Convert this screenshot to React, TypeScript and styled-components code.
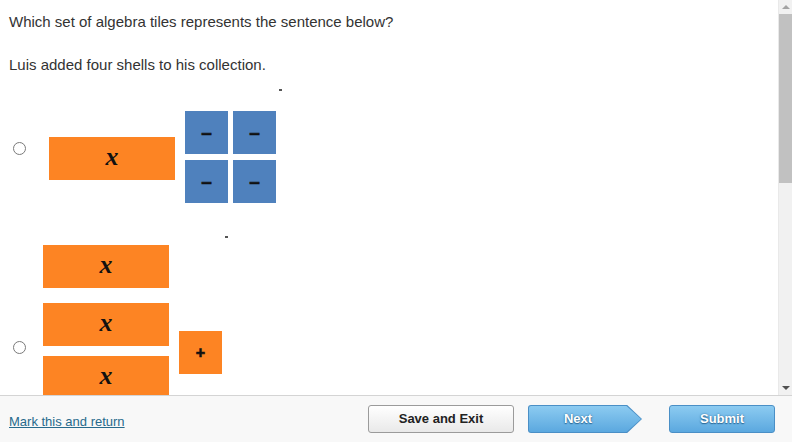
import React from 'react';
import styled, { createGlobalStyle } from 'styled-components';

const GlobalStyle = createGlobalStyle`
  html, body {
    margin: 0;
    padding: 0;
    background: #ffffff;
    font-family: "Liberation Sans", Arial, sans-serif;
  }
`;

const Page = styled.div`
  width: 792px;
  height: 442px;
  display: flex;
  flex-direction: column;
  overflow: hidden;
`;

const ScrollRegion = styled.div`
  height: 395px;
  display: flex;
  overflow: hidden;
`;

const Content = styled.div`
  flex: 1;
  padding-top: 13px;
  overflow: hidden;
`;

const Prompt = styled.p<{ $gap?: number }>`
  margin: ${(p) => p.$gap ?? 0}px 0 0 9px;
  font-size: 15px;
  line-height: 17px;
  color: #333333;
`;

const Speck = styled.div<{ $x: number; $gap: number }>`
  width: 3px;
  height: 2px;
  margin: ${(p) => p.$gap}px 0 0 ${(p) => p.$x}px;
  background: #555555;
`;

const OptionRow = styled.div<{ $gap: number }>`
  display: flex;
  align-items: flex-start;
  margin-top: ${(p) => p.$gap}px;
`;

const Radio = styled.input.attrs({ type: 'radio', name: 'answer' })<{ $top: number }>`
  appearance: none;
  box-sizing: border-box;
  width: 13px;
  height: 13px;
  margin: ${(p) => p.$top}px 0 0 13px;
  border: 1px solid #7a7a7a;
  border-radius: 50%;
  background: #ffffff;
  flex-shrink: 0;
`;

const Tile = styled.div<{ $w: number; $color: string; $left?: number; $top?: number }>`
  width: ${(p) => p.$w}px;
  height: 43px;
  margin: ${(p) => p.$top ?? 0}px 0 0 ${(p) => p.$left ?? 0}px;
  background: ${(p) => p.$color};
  display: flex;
  align-items: center;
  justify-content: center;
  flex-shrink: 0;
`;

const Variable = styled.span`
  font-family: "Liberation Serif", "Times New Roman", serif;
  font-style: italic;
  font-weight: bold;
  font-size: 26px;
  line-height: 1;
  color: #111111;
  margin-top: -4px;
`;

const Sign = styled.span<{ $size: number }>`
  font-family: "Liberation Sans", Arial, sans-serif;
  font-weight: 900;
  font-size: ${(p) => p.$size}px;
  line-height: 1;
  color: #111111;
  -webkit-text-stroke: 0.6px #111111;
`;

const UnitGrid = styled.div`
  display: grid;
  grid-template-columns: repeat(2, 43px);
  grid-auto-rows: 43px;
  gap: 6px 5px;
  margin-left: 10px;
`;

const TileColumn = styled.div`
  display: flex;
  flex-direction: column;
  margin-left: 17px;
`;

const Scrollbar = styled.div`
  width: 13px;
  display: flex;
  flex-direction: column;
  align-items: center;
  background: #f1f1f1;
  border-left: 1px solid #e9e9e9;
`;

const ArrowBox = styled.div`
  height: 14px;
  width: 100%;
  display: flex;
  align-items: center;
  justify-content: center;
`;

const Arrow = styled.div<{ $down?: boolean; $color: string }>`
  width: 0;
  height: 0;
  border-left: 4px solid transparent;
  border-right: 4px solid transparent;
  ${(p) =>
    p.$down
      ? `border-top: 4px solid ${p.$color};`
      : `border-bottom: 4px solid ${p.$color};`}
`;

const Thumb = styled.div`
  width: 100%;
  height: 169px;
  background: #c1c1c1;
`;

const Track = styled.div`
  flex: 1;
`;

const Footer = styled.div`
  height: 46px;
  border-top: 1px solid #d4d4d4;
  background: #f8f8f8;
  display: flex;
  align-items: center;
  padding: 0 17px 0 9px;
`;

const MarkLink = styled.a`
  margin-top: 4px;
  font-size: 13px;
  color: #276a8c;
  text-decoration: underline;
  cursor: pointer;
`;

const Buttons = styled.div`
  margin-left: auto;
  display: flex;
  align-items: center;
`;

const SaveButton = styled.button`
  width: 146px;
  height: 28px;
  border: 1px solid #9b9b9b;
  border-radius: 3px;
  background: linear-gradient(#ffffff, #e9e9e9);
  font-family: "Liberation Sans", Arial, sans-serif;
  font-weight: bold;
  font-size: 13px;
  color: #222222;
  padding: 0 0 2px;
`;

const NextShell = styled.div`
  width: 114px;
  height: 28px;
  margin-left: 14px;
  padding: 1px;
  box-sizing: border-box;
  background: #4a8fc6;
  border-radius: 3px 0 0 3px;
  clip-path: polygon(0 0, 87% 0, 100% 50%, 87% 100%, 0 100%);
`;

const NextFace = styled.button`
  width: 100%;
  height: 100%;
  border: none;
  padding: 0 14px 2px 0;
  border-radius: 2px 0 0 2px;
  background: linear-gradient(#8ccbf1, #5ba8df);
  clip-path: polygon(0 0, 87% 0, 100% 50%, 87% 100%, 0 100%);
  font-family: "Liberation Sans", Arial, sans-serif;
  font-weight: bold;
  font-size: 13px;
  color: #ffffff;
  text-shadow: 0 0 2px #2d6b99, 0 1px 1px #2d6b99;
`;

const SubmitButton = styled.button`
  width: 106px;
  height: 28px;
  margin-left: 27px;
  border: 1px solid #4a8fc6;
  border-radius: 3px;
  background: linear-gradient(#8ccbf1, #5ba8df);
  font-family: "Liberation Sans", Arial, sans-serif;
  font-weight: bold;
  font-size: 13px;
  color: #ffffff;
  text-shadow: 0 0 2px #2d6b99, 0 1px 1px #2d6b99;
  padding: 0 0 2px;
`;

const ORANGE = '#fd8423';
const BLUE = '#4f81bd';

function App() {
  return (
    <Page>
      <GlobalStyle />
      <ScrollRegion>
        <Content>
          <Prompt>Which set of algebra tiles represents the sentence below?</Prompt>
          <Prompt $gap={26}>Luis added four shells to his collection.</Prompt>

          <Speck $x={279} $gap={16} />
          <OptionRow $gap={20}>
            <Radio $top={31} />
            <Tile $w={126} $color={ORANGE} $left={23} $top={26}>
              <Variable>x</Variable>
            </Tile>
            <UnitGrid>
              {[0, 1, 2, 3].map((i) => (
                <Tile key={i} $w={43} $color={BLUE}>
                  <Sign $size={19}>–</Sign>
                </Tile>
              ))}
            </UnitGrid>
          </OptionRow>

          <Speck $x={225} $gap={33} />
          <OptionRow $gap={7}>
            <Radio $top={96} />
            <TileColumn>
              <Tile $w={126} $color={ORANGE}>
                <Variable>x</Variable>
              </Tile>
              <Tile $w={126} $color={ORANGE} $top={15}>
                <Variable>x</Variable>
              </Tile>
              <Tile $w={126} $color={ORANGE} $top={10}>
                <Variable>x</Variable>
              </Tile>
            </TileColumn>
            <Tile $w={43} $color={ORANGE} $left={10} $top={86}>
              <Sign $size={16}>+</Sign>
            </Tile>
          </OptionRow>
        </Content>

        <Scrollbar>
          <ArrowBox>
            <Arrow $color="#a3a3a3" />
          </ArrowBox>
          <Thumb />
          <Track />
          <ArrowBox>
            <Arrow $down $color="#505050" />
          </ArrowBox>
        </Scrollbar>
      </ScrollRegion>

      <Footer>
        <MarkLink>Mark this and return</MarkLink>
        <Buttons>
          <SaveButton>Save and Exit</SaveButton>
          <NextShell>
            <NextFace>Next</NextFace>
          </NextShell>
          <SubmitButton>Submit</SubmitButton>
        </Buttons>
      </Footer>
    </Page>
  );
}

export default App;
